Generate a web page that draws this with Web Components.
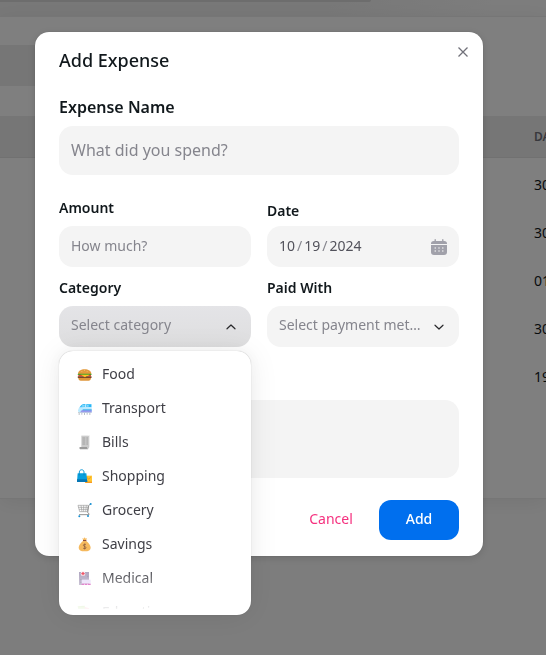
<!DOCTYPE html>
<html lang="en">
<head>
<meta charset="utf-8">
<meta name="viewport" content="width=device-width, initial-scale=1">
<title>Add Expense</title>
<style>
body { margin: 0; background: #fff; color: #11181c; font: 14px/20px "Noto Sans", sans-serif; }
</style>
</head>
<body>
<expense-page></expense-page>
<modal-overlay>
  <modal-card heading="Add Expense">
    <text-field label="Expense Name" placeholder="What did you spend?" size="large"></text-field>
    <field-grid>
      <text-field label="Amount" placeholder="How much?"></text-field>
      <date-field label="Date" value="2024-10-19"></date-field>
      <select-field label="Category" placeholder="Select category" open>
        <option-item icon="burger">Food</option-item>
        <option-item icon="train">Transport</option-item>
        <option-item icon="receipt">Bills</option-item>
        <option-item icon="bags">Shopping</option-item>
        <option-item icon="cart">Grocery</option-item>
        <option-item icon="money">Savings</option-item>
        <option-item icon="hospital">Medical</option-item>
        <option-item icon="books">Education</option-item>
      </select-field>
      <select-field label="Paid With" placeholder="Select payment method"></select-field>
    </field-grid>
    <note-field></note-field>
    <action-button slot="actions" variant="light">Cancel</action-button>
    <action-button slot="actions">Add</action-button>
  </modal-card>
</modal-overlay>

<script>
const define = (name, html, setup) => {
  const template = document.createElement('template');
  template.innerHTML = html;
  customElements.define(name, class extends HTMLElement {
    constructor() {
      super();
      this.attachShadow({ mode: 'open' }).append(template.content.cloneNode(true));
    }
    connectedCallback() { if (setup) setup(this, this.shadowRoot); }
  });
};

const fieldStyle = `
  :host { display: block; min-width: 0; }
  * { box-sizing: border-box; }
  label { display: block; font-size: 14px; font-weight: 600; line-height: 20px; margin-bottom: 8px; }
  input, select, textarea {
    display: block; width: 100%; border: 0; outline: 0; margin: 0;
    background: #f4f4f4; border-radius: 14px; color: #52525b;
    font: 14px/20px "Noto Sans", sans-serif; padding: 0 12px 2px; height: 41px;
  }
  ::placeholder { color: #85858d; opacity: 1; }
  .box { position: relative; }
  .box svg { position: absolute; right: 12px; top: 0; bottom: 0; margin: auto; pointer-events: none; }`;

const icons = {
  burger: `<path fill="#e39a3c" d="M3 21C3 12 12 7 23 7s20 5 20 14z"/><path fill="#f2c172" d="M13 12h3v2h-3zm8-2h3v2h-3zm8 3h3v2h-3z"/><rect x="2" y="20" width="42" height="4" rx="2" fill="#44a12b"/><path fill="#e9442d" d="M4 24h38v4H4z"/><path fill="#ffc525" d="M10 23h27l-7 7z"/><rect x="2" y="28" width="42" height="5" rx="2" fill="#7b4426"/><path fill="#ffc525" d="M14 25h18l-8 6z"/><path fill="#df963b" d="M4 33h38c0 5-3 8-7 8H11c-4 0-7-3-7-8z"/>`,
  train: `<path fill="#b9c0c8" d="M3 34h41v2H3zM5 36h3v6H5zm8 0h3v5h-3zm8 0h3v6h-3zm8 0h3v5h-3zm8 0h3v6h-3z"/><path fill="#bceaff" d="M3 28C6 17 13 10 19 9h25v25H8c-4 0-5-2-5-6z"/><path fill="#29b6f6" d="M8 19c3-5 7-9 12-10h5l-2 9zM28 10h15v8H28z"/><path fill="#82d9fa" d="M17 11h7l-2 6h-9zM30 12h5v5h-5z"/><path fill="#9998ed" d="M17 27h27v7H10c2-5 4-7 7-7z"/><path fill="#32aee9" d="M17 25h27v3H17z"/>`,
  receipt: `<path fill="#cbcbcb" d="M12 1l3 2 3-2 3 2 3-2 3 2 3-2 3 2 4-2v33c0 5-2 8-6 8H13V3z"/><path fill="#9b9b9b" d="M8 36h22c0 4 2 6 4 7H12c-4 0-6-3-4-7z"/><path stroke="#8b8b8b" stroke-width="2" d="M16 9h9m3 0h5M16 15h9m3 0h5M16 21h9m3 0h5M16 27h9m3 0h5"/>`,
  bags: `<path fill="#ffc734" d="M25 20h20v22H25z"/><path fill="#f79a22" d="M25 38h20v4H25z"/><path fill="none" stroke="#e98318" stroke-width="2" d="M30 23c0 9 10 9 10 0"/><path fill="none" stroke="#169bd7" stroke-width="3" d="M7 17V9c0-9 14-9 14 0v8"/><path fill="#079fdd" d="M2 13h26l3 25H0z"/><path fill="#0777b4" d="M0 31h30l1 8H0z"/><path stroke="#0878b3" stroke-width="2" d="M7 14v5m14-5v5"/>`,
  cart: `<path fill="none" stroke="#9b9b9b" stroke-width="2" d="M3 7h31l-3 19H8zM4 13h29M6 19h27M12 7l3 19M20 7v19M28 7l-2 19"/><path fill="none" stroke="#929292" stroke-width="3" d="M39 4l-4 4-3 21 4 3v3H6"/><circle cx="41" cy="3" r="3" fill="#168fd2"/><circle cx="7" cy="40" r="3" fill="#168fd2"/><circle cx="33" cy="39" r="3" fill="#168fd2"/>`,
  money: `<path fill="#f5b95e" d="M16 3l4 2 3-4 3 4 4-2-3 8h-8zM18 12h10c7 6 13 13 13 20 0 7-6 11-18 11S5 39 5 32c0-7 6-14 13-20z"/><path fill="#8e4c3d" d="M18 9h10v3H18z"/><path fill="none" stroke="#80523c" stroke-width="2" d="M27 23c-2-2-8-2-8 2s8 3 8 7-6 4-9 1M23 20v17"/>`,
  hospital: `<path fill="#aaa0bc" d="M6 3h30v39H6z"/><path fill="#8f87a3" d="M10 24h4v4h-4zm0 8h4v4h-4zm21-18h3v5h-3z"/><circle cx="18" cy="8" r="7" fill="#f8e9ef"/><path stroke="#ed4056" stroke-width="4" d="M18 3v10M13 8h10"/><path fill="#e7ddfa" d="M14 26h27v12H14z"/><path fill="#d142b0" d="M14 38h27v4H14z"/><path fill="#f9ddf4" d="M21 38h2v4h-2zm9 0h2v4h-2z"/>`,
  books: `<path fill="#92cb4b" d="M2 4l21-2 4 25-20 3z"/><path fill="#f4657e" d="M23 6l13 4 7 19-16 3z"/><path fill="#4a9fd8" d="M5 27h37v14H5z"/>`
};

define('expense-page', `
  <style>
    :host { display: block; height: 100vh; overflow: hidden; background: #fbfbfb; }
    .strip { height: 16px; box-sizing: border-box; background: linear-gradient(90deg, #f0f0f0 60%, #fafafa 90%); }
    .edge { width: 68%; height: 2px; background: #dadada; border-radius: 0 0 8px 0; }
    main { background: #fff; border: solid #ececec; border-width: 1px 0; box-shadow: 0 4px 18px #0001; padding: 28px 0 97px; }
    .search { height: 41px; width: 20%; background: #ededed; border-radius: 0 12px 12px 0; margin-bottom: 30px; }
    table { width: 100%; border-collapse: collapse; table-layout: fixed; }
    th { height: 41px; padding: 0; background: #ededed; border-bottom: 1px solid #e2e2e2; font-size: 12px; font-weight: 600; color: #71717a; text-align: left; }
    td { height: 48px; padding: 0; white-space: nowrap; color: #11181c; }
    tr:first-child td { padding-top: 3px; }
    .date { width: 12px; }
  </style>
  <div class="strip"><div class="edge"></div></div>
  <main>
    <div class="search"></div>
    <table>
      <thead><tr><th></th><th class="date">DATE</th></tr></thead>
      <tbody>
        <tr><td></td><td>30</td></tr>
        <tr><td></td><td>30</td></tr>
        <tr><td></td><td>01</td></tr>
        <tr><td></td><td>30</td></tr>
        <tr><td></td><td>19</td></tr>
      </tbody>
    </table>
  </main>`);

define('modal-overlay', `
  <style>
    :host { position: fixed; inset: 0; box-sizing: border-box; padding: 32px 63px 32px 35px; background: rgba(0, 0, 0, .5); }
  </style>
  <slot></slot>`);

define('modal-card', `
  <style>
    :host { display: block; background: #fff; border-radius: 14px; box-shadow: 0 2px 10px #0002, 0 0 1px #0005; padding: 14px 24px 16px; position: relative; }
    h2 { margin: 0 0 20px; font-size: 18px; line-height: 28px; font-weight: 500; }
    .close { position: absolute; top: 8px; right: 8px; width: 24px; height: 24px; padding: 0; border: 0; background: none; display: grid; place-items: center; color: #71717a; }
    footer { display: flex; justify-content: flex-end; gap: 8px; margin-top: 22px; }
  </style>
  <h2></h2>
  <button class="close" aria-label="Close"><svg width="12" height="12" viewBox="0 0 12 12" fill="none" stroke="currentColor" stroke-width="1.3"><path d="M1.5 1.5l9 9M10.5 1.5l-9 9"/></svg></button>
  <slot></slot>
  <footer><slot name="actions"></slot></footer>`,
  (el, root) => { root.querySelector('h2').textContent = el.getAttribute('heading'); });

define('field-grid', `
  <style>
    :host { display: grid; grid-template-columns: 1fr 1fr; gap: 11px 16px; align-items: end; margin-top: 23px; }
  </style>
  <slot></slot>`);

define('text-field', `
  <style>${fieldStyle}
    :host([size=large]) label { font-size: 16px; line-height: 26px; margin-bottom: 6px; }
    :host([size=large]) input { font-size: 16px; height: 49px; }
  </style>
  <label for="control"></label>
  <input id="control" type="text">`,
  (el, root) => {
    root.querySelector('label').textContent = el.getAttribute('label');
    root.querySelector('input').placeholder = el.getAttribute('placeholder');
  });

define('date-field', `
  <style>${fieldStyle}
    label { margin-bottom: 5px; }
    input::-webkit-calendar-picker-indicator { opacity: 0; }
    input::-webkit-datetime-edit-fields-wrapper { padding: 0; }
    input::-webkit-datetime-edit-text { color: #85858d; padding: 0 2px; }
    input::-webkit-datetime-edit-month-field, input::-webkit-datetime-edit-day-field, input::-webkit-datetime-edit-year-field { padding: 0; }
  </style>
  <label for="control"></label>
  <div class="box">
    <input id="control" type="date">
    <svg width="16" height="16" viewBox="0 0 16 16" fill="#a1a1aa"><path d="M3.500 .8q0-.8.700-.8t.700.8V2h6.200V.8q0-.8.700-.8t.700.8V2h.700Q16 2 16 4.500V5H0v-.5Q0 2 2.800 2h.7z"/><path d="M0 6h16v7q0 3-3 3H3q-3 0-3-3z"/><path stroke="#f4f4f4" stroke-width="1.5" stroke-linecap="round" d="M4.200 9h.01M8 9h.01M11.800 9h.01M4.200 12h.01M8 12h.01M11.800 12h.01"/></svg>
  </div>`,
  (el, root) => {
    root.querySelector('label').textContent = el.getAttribute('label');
    root.querySelector('input').value = el.getAttribute('value');
  });

define('select-field', `
  <style>${fieldStyle}
    select { appearance: none; color: #85858d; padding-right: 38px; padding-bottom: 3px; text-overflow: ellipsis; white-space: nowrap; overflow: hidden; }
    .box svg { right: 13px; }
    .menu { display: none; }
    :host([open]) select { background: linear-gradient(#e4e4e7, #dededf); }
    :host([open]) .box svg { transform: rotate(180deg); }
    :host([open]) .menu {
      display: block; position: absolute; z-index: 2; top: calc(100% + 4px); left: 0; right: 0;
      padding: 6px; background: #fff; border-radius: 14px;
      box-shadow: 0 0 15px #00000008, 0 2px 30px #00000014, 0 0 1px #0000004d;
    }
    .list { max-height: 252px; overflow: hidden; -webkit-mask-image: linear-gradient(#000 calc(100% - 40px), #0001); mask-image: linear-gradient(#000 calc(100% - 40px), #0001); }
  </style>
  <label for="control"></label>
  <div class="box">
    <select id="control"><option></option></select>
    <svg width="14" height="14" viewBox="0 0 14 14" fill="none" stroke="#27272a" stroke-width="1.2" stroke-linecap="round" stroke-linejoin="round"><path d="M3 5.200L7 9 11 5.200"/></svg>
    <div class="menu"><div class="list" role="listbox" aria-label="Options"><slot></slot></div></div>
  </div>`,
  (el, root) => {
    root.querySelector('label').textContent = el.getAttribute('label');
    root.querySelector('option').textContent = el.getAttribute('placeholder');
  });

define('option-item', `
  <style>
    :host { display: flex; align-items: center; gap: 10px; height: 34px; padding: 0 12px; color: #3f3f46; }
    svg { width: 15px; height: 15px; flex: none; }
  </style>
  <svg viewBox="0 0 45 45" aria-hidden="true"></svg><span><slot></slot></span>`,
  (el, root) => {
    el.setAttribute('role', 'option');
    root.querySelector('svg').innerHTML = icons[el.getAttribute('icon')];
  });

define('note-field', `
  <style>${fieldStyle}
    :host { margin-top: 53px; }
    textarea { height: 78px; padding: 10px 12px; resize: none; }
  </style>
  <textarea aria-label="Note"></textarea>`);

define('action-button', `
  <style>
    :host { display: block; }
    button { min-width: 80px; height: 40px; border: 0; border-radius: 12px; padding: 0 16px 2px; background: #006fee; color: #fff; font: 500 14px/20px "Noto Sans", sans-serif; }
    :host([variant=light]) button { background: transparent; color: #f5317f; font-weight: 400; }
  </style>
  <button type="button"><slot></slot></button>`);
</script>
</body>
</html>
